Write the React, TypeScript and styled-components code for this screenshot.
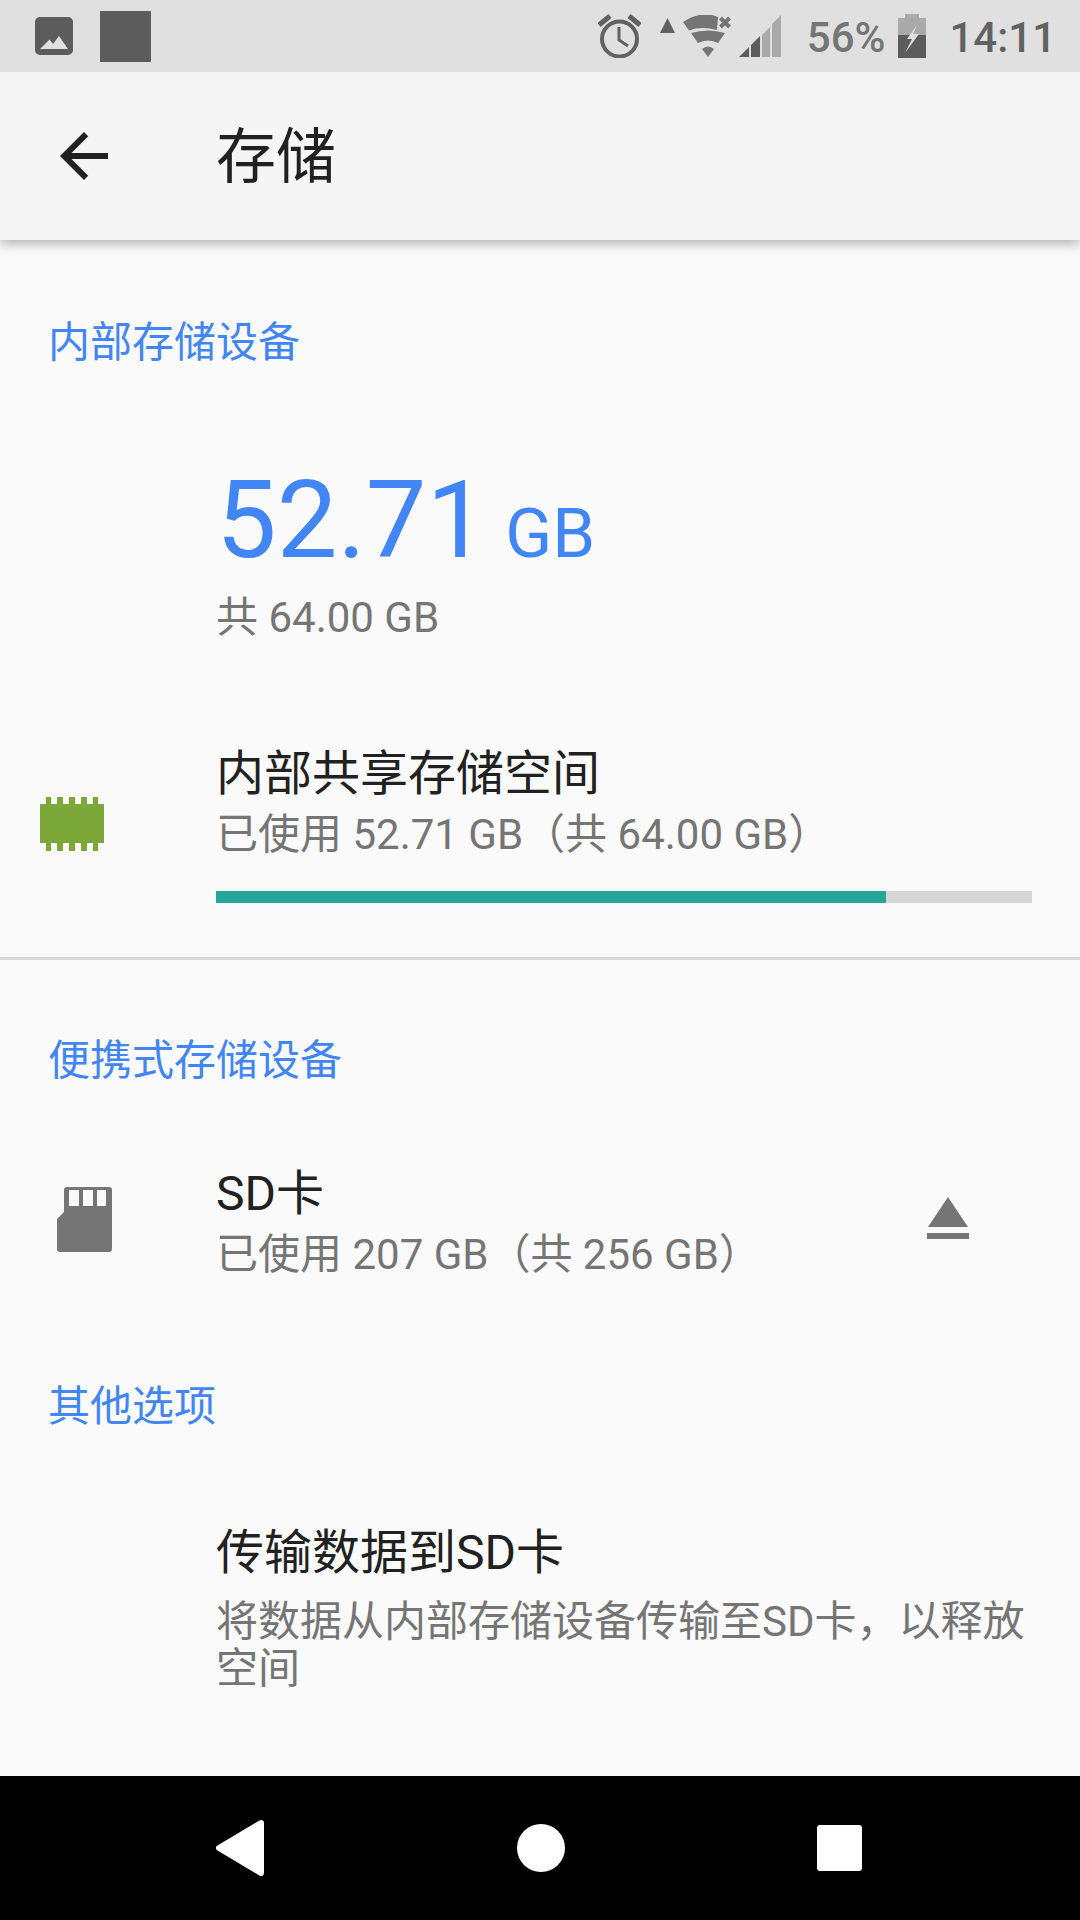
import React from "react";
import styled, { createGlobalStyle } from "styled-components";

const GlobalStyle = createGlobalStyle`
  html, body {
    margin: 0;
    padding: 0;
    background: #fafafa;
  }
  body {
    font-family: Roboto, "Noto Sans CJK SC", sans-serif;
  }
`;

export default function App() {
  return (
    <Screen>
      <GlobalStyle />
      <StatusBar>
        <Notifications>
          <svg width="38" height="38" viewBox="0 0 38 38">
            <path
              fill="#5c5c5c"
              fillRule="evenodd"
              d="M5 0h28a5 5 0 0 1 5 5v28a5 5 0 0 1-5 5H5a5 5 0 0 1-5-5V5a5 5 0 0 1 5-5zM5 32h28l-9-13-6 8-3.500-4.500z"
            />
          </svg>
          <BlankThumb />
        </Notifications>
        <StatusIcons>
          <Slot>
            <svg width="43" height="44" viewBox="0 0 43 44" fill="none" stroke="#616161">
              <circle cx="21.500" cy="25" r="17.500" strokeWidth="4" />
              <path d="M21 13v13l9 6" strokeWidth="3" />
              <path d="M1 11 12 2M42 11 31 2" strokeWidth="5" />
            </svg>
          </Slot>
          <Slot $gap={19} $rise={21}>
            <svg width="15" height="15" viewBox="0 0 15 15">
              <path fill="#616161" d="M7.500 0 15 15H0z" />
            </svg>
          </Slot>
          <Slot $gap={8}>
            <svg width="50" height="43" viewBox="0 0 50 43">
              <path
                fill="#757575"
                d="M0 7Q18-5 35 2L34 15Q18 11 6 15.500ZM8 18Q25 13 42 18L35 28Q25 23 15 28ZM19 34Q25 29 31 34L25 42Z"
              />
              <path d="M37.500 3 46.500 12M46.500 3 37.500 12" stroke="#757575" strokeWidth="4" />
            </svg>
          </Slot>
          <Slot $gap={6}>
            <svg width="42" height="42" viewBox="0 0 42 42">
              <path fill="#aaaaaa" d="M23 20 31 12V42H23zM33 9 42 0V42H33z" />
              <path fill="#5c5c5c" d="M0 42 10 32V42zM12 30 21 21V42H12z" />
            </svg>
          </Slot>
          <Percent>56%</Percent>
          <Slot $gap={13}>
            <svg width="28" height="44" viewBox="0 0 28 44">
              <path fill="#aaaaaa" d="M7 0h14v4h7v18H0V4h7z" />
              <path fill="#5c5c5c" d="M0 21h28v23H0z" />
              <path fill="#e0e0e0" d="M19 11 9 25h5L7 39l14-19h-6z" />
            </svg>
          </Slot>
          <Clock>14:11</Clock>
        </StatusIcons>
      </StatusBar>

      <AppBar>
        <BackButton>
          <svg width="72" height="72" viewBox="0 0 24 24">
            <path
              fill="#212121"
              d="M20 11H7.830l5.590-5.590L12 4l-8 8 8 8 1.410-1.410L7.830 13H20v-2z"
            />
          </svg>
        </BackButton>
        <PageTitle>存储</PageTitle>
      </AppBar>

      <Content>
        <SectionTitle $top={73}>内部存储设备</SectionTitle>
        <UsedAmount>
          <BigNumber>52.71</BigNumber>
          <BigUnit>GB</BigUnit>
        </UsedAmount>
        <TotalAmount>共 64.00 GB</TotalAmount>

        <StorageRow $top={95}>
          <RowIcon $left={40} $height={162}>
            <svg width="64" height="54" viewBox="0 0 64 54">
              <path
                fill="#7ca83a"
                d="M0 7h6V0h5v7h6V0h6v7h6V0h6v7h6V0h6v7h6V0h5v7h6v39h-6v8h-5v-8h-6v8h-6v-8h-6v8h-6v-8h-6v8h-6v-8h-6v8H6v-8H0z"
              />
            </svg>
          </RowIcon>
          <RowBody>
            <RowTitle>内部共享存储空间</RowTitle>
            <RowSummary>已使用 52.71 GB（共 64.00 GB）</RowSummary>
            <Progress>
              <ProgressFill style={{ width: "82.1%" }} />
            </Progress>
          </RowBody>
        </StorageRow>

        <Divider />

        <SectionTitle $top={71}>便携式存储设备</SectionTitle>

        <StorageRow $top={72}>
          <RowIcon $left={57} $height={113}>
            <svg width="55" height="65" viewBox="0 0 55 65">
              <path
                fill="#757575"
                fillRule="evenodd"
                d="M10 0h42a3 3 0 0 1 3 3v59a3 3 0 0 1-3 3H3a3 3 0 0 1-3-3V32l7-7V3a3 3 0 0 1 3-3zM12 3v16h10V3zM26 3v16h10V3zM40 3v16h9V3z"
              />
            </svg>
          </RowIcon>
          <RowBody>
            <RowTitle>SD卡</RowTitle>
            <RowSummary>已使用 207 GB（共 256 GB）</RowSummary>
          </RowBody>
          <EjectButton>
            <svg width="42" height="42" viewBox="0 0 42 42">
              <path fill="#757575" d="M21 0 41 30H1zM0 36h42v6H0z" />
            </svg>
          </EjectButton>
        </StorageRow>

        <SectionTitle $top={92}>其他选项</SectionTitle>

        <StorageRow $top={85}>
          <RowBody>
            <RowTitle>传输数据到SD卡</RowTitle>
            <RowSummary $wrapped>将数据从内部存储设备传输至SD卡，以释放空间</RowSummary>
          </RowBody>
        </StorageRow>
      </Content>

      <NavBar>
        <svg width="48" height="56" viewBox="0 0 48 56">
          <path
            fill="#fff"
            stroke="#fff"
            strokeWidth="6"
            strokeLinejoin="round"
            d="M45 3 3 28l42 25z"
          />
        </svg>
        <HomeButton />
        <RecentsButton />
      </NavBar>
    </Screen>
  );
}

const Screen = styled.div`
  width: 1080px;
  height: 1920px;
  display: flex;
  flex-direction: column;
  overflow: hidden;
  background: #fafafa;
`;

const StatusBar = styled.div`
  position: relative;
  z-index: 2;
  height: 72px;
  flex: none;
  display: flex;
  align-items: center;
  justify-content: space-between;
  padding: 0 24px 0 35px;
  background: #e0e0e0;
`;

const Notifications = styled.div`
  display: flex;
  align-items: center;
  gap: 27px;
`;

const BlankThumb = styled.div`
  width: 51px;
  height: 51px;
  background: #5c5c5c;
`;

const StatusIcons = styled.div`
  display: flex;
  align-items: center;
`;

const Slot = styled.div<{ $gap?: number; $rise?: number }>`
  display: flex;
  margin-left: ${(p) => p.$gap ?? 0}px;
  margin-bottom: ${(p) => p.$rise ?? 0}px;
`;

const Percent = styled.span`
  margin-left: 26px;
  padding-top: 3px;
  font-size: 42px;
  line-height: 69px;
  font-weight: 500;
  color: #757575;
`;

const Clock = styled.span`
  margin-left: 23px;
  padding-top: 3px;
  font-size: 42px;
  line-height: 69px;
  font-weight: 500;
  color: #616161;
`;

const AppBar = styled.header`
  position: relative;
  z-index: 1;
  height: 168px;
  flex: none;
  display: flex;
  align-items: center;
  background: #f5f5f5;
  box-shadow: 0 3px 12px rgba(0, 0, 0, 0.32);
`;

const BackButton = styled.div`
  display: flex;
  margin-left: 48px;
`;

const PageTitle = styled.h1`
  margin: 4px 0 0 96px;
  font-size: 60px;
  font-weight: 400;
  line-height: 72px;
  color: #212121;
`;

const Content = styled.main`
  flex: 1;
  min-height: 0;
  display: flex;
  flex-direction: column;
`;

const SectionTitle = styled.div<{ $top: number }>`
  margin: ${(p) => p.$top}px 0 0 48px;
  font-size: 42px;
  line-height: 60px;
  color: #4285f4;
`;

const UsedAmount = styled.div`
  margin: 81px 0 0 216px;
  display: flex;
  align-items: baseline;
  height: 132px;
  line-height: 132px;
  color: #4285f4;
`;

const BigNumber = styled.span`
  font-size: 108px;
`;

const BigUnit = styled.span`
  margin-left: 18px;
  font-size: 69px;
`;

const TotalAmount = styled.div`
  margin: 2px 0 0 216px;
  font-size: 42px;
  line-height: 60px;
  color: #757575;
`;

const StorageRow = styled.div<{ $top: number }>`
  margin-top: ${(p) => p.$top}px;
  display: flex;
  align-items: flex-start;
  padding-right: 48px;
`;

const RowIcon = styled.div<{ $left: number; $height: number }>`
  width: 216px;
  flex: none;
  box-sizing: border-box;
  height: ${(p) => p.$height}px;
  padding-left: ${(p) => p.$left}px;
  display: flex;
  align-items: center;
`;

const RowBody = styled.div`
  flex: 1;
  min-width: 0;
  &:only-child {
    margin-left: 216px;
  }
`;

const RowTitle = styled.div`
  font-size: 48px;
  line-height: 62px;
  color: #212121;
`;

const RowSummary = styled.div<{ $wrapped?: boolean }>`
  margin-top: ${(p) => (p.$wrapped ? 14 : 0)}px;
  font-size: 42px;
  line-height: ${(p) => (p.$wrapped ? 47 : 60)}px;
  color: #757575;
`;

const Progress = styled.div`
  margin-top: 26px;
  height: 12px;
  background: #d6d6d6;
`;

const ProgressFill = styled.div`
  height: 100%;
  background: #26a69a;
`;

const Divider = styled.div`
  height: 3px;
  margin-top: 52px;
  flex: none;
  background: #d9d9d9;
`;

const EjectButton = styled.div`
  flex: none;
  display: flex;
  align-items: center;
  height: 110px;
  margin-right: 63px;
`;

const NavBar = styled.nav`
  height: 144px;
  flex: none;
  display: flex;
  align-items: center;
  justify-content: space-between;
  padding: 0 218px 0 216px;
  background: #000;
`;

const HomeButton = styled.div`
  width: 48px;
  height: 48px;
  border-radius: 50%;
  background: #fff;
`;

const RecentsButton = styled.div`
  width: 45px;
  height: 46px;
  border-radius: 3px;
  background: #fff;
`;
